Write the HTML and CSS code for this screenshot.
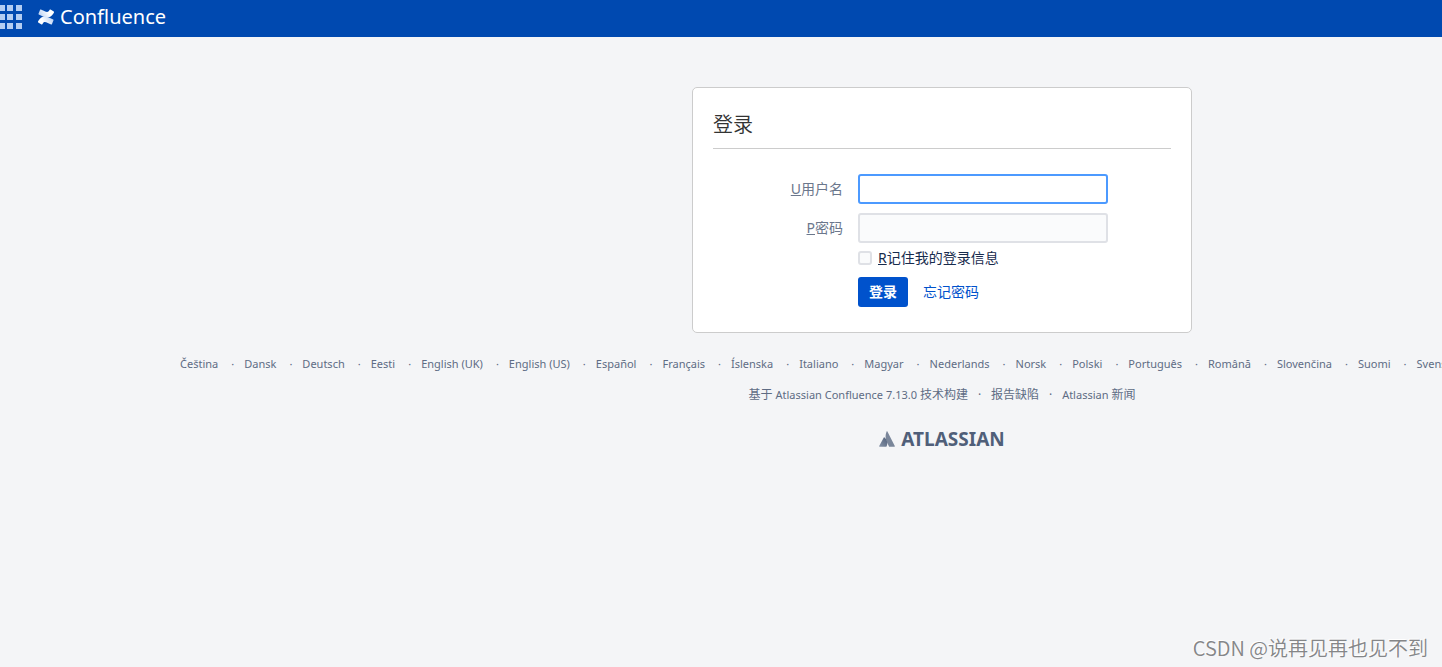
FILE: index.html
```html
<!DOCTYPE html>
<html lang="zh-CN">
<head>
<meta charset="utf-8">
<title>登录 - Confluence</title>
<link rel="stylesheet" href="styles.css">
</head>
<body>
<header class="topbar">
  <button class="switcher" type="button" aria-label="应用程序">
    <svg width="23" height="24" viewBox="0 0 23 24" fill="#b3cdf2" aria-hidden="true">
      <path d="M0 0h5v6H0zM7 0h6v6H7zM16 0h6v6h-6zM0 9h5v6H0zM7 9h6v6H7zM16 9h6v6h-6zM0 18h5v6H0zM7 18h6v6H7zM16 18h6v6h-6z"/>
    </svg>
  </button>
  <a class="brand" href="#">
    <svg width="16" height="16" viewBox="0 0 16 16" aria-hidden="true">
      <defs>
        <linearGradient id="wave-top" x1="1" y1="0" x2="0" y2="0.3"><stop offset="0.4" stop-color="#fff"/><stop offset="1" stop-color="#c4d8f5"/></linearGradient>
        <linearGradient id="wave-bottom" x1="0" y1="1" x2="1" y2="0.7"><stop offset="0.4" stop-color="#fff"/><stop offset="1" stop-color="#c4d8f5"/></linearGradient>
      </defs>
      <path fill="url(#wave-bottom)" d="M.6 11.500 0 12.600c-.1.300 0 .6.200.8l3.300 2.100c.3.200.6.100.8-.2l.5-.8c1.300-2.100 2.600-1.500 5-.4l3.300 1.400c.3.100.6 0 .8-.3l1.600-3.900c.1-.3 0-.6-.3-.7l-3.200-1.500C7 6.600 3.500 6.800.6 11.500z"/>
      <path fill="url(#wave-top)" d="M15.400 4.500 16 3.400c.1-.3 0-.6-.2-.8L12.500.5c-.3-.2-.6-.1-.8.200l-.5.8c-1.300 2.100-2.600 1.500-5 .4L2.900.5c-.3-.1-.6 0-.8.3L.5 4.700c-.1.300 0 .6.300.7L4 6.900C9 9.400 12.500 9.200 15.400 4.500z"/>
    </svg>
    <span>Confluence</span>
  </a>
</header>
<div class="viewport">
<div class="page">
  <main class="card">
    <h1 class="title">登录</h1>
    <form class="form">
      <label class="label" for="user"><u>U</u>用户名</label>
      <input class="field" id="user" type="text" autofocus>
      <label class="label" for="pass"><u>P</u>密码</label>
      <input class="field" id="pass" type="password">
      <div class="remember">
        <input class="check" id="remember" type="checkbox">
        <label for="remember"><u>R</u>记住我的登录信息</label>
      </div>
      <div class="actions">
        <button class="submit" type="button">登录</button>
        <a class="forgot" href="#">忘记密码</a>
      </div>
    </form>
  </main>
  <footer class="footer">
    <ul class="links languages">
      <li><a href="#">Čeština</a></li><li><a href="#">Dansk</a></li><li><a href="#">Deutsch</a></li><li><a href="#">Eesti</a></li><li><a href="#">English (UK)</a></li><li><a href="#">English (US)</a></li><li><a href="#">Español</a></li><li><a href="#">Français</a></li><li><a href="#">Íslenska</a></li><li><a href="#">Italiano</a></li><li><a href="#">Magyar</a></li><li><a href="#">Nederlands</a></li><li><a href="#">Norsk</a></li><li><a href="#">Polski</a></li><li><a href="#">Português</a></li><li><a href="#">Română</a></li><li><a href="#">Slovenčina</a></li><li><a href="#">Suomi</a></li><li><a href="#">Svenska</a></li>
    </ul>
    <ul class="links about">
      <li>基于 <span class="latin"><a href="#">Atlassian Confluence</a> 7.13.0</span> 技术构建</li><li><a href="#">报告缺陷</a></li><li><a href="#"><span class="latin">Atlassian</span> 新闻</a></li>
    </ul>
    <a class="atlassian" href="#">
      <svg width="16" height="16" viewBox="0 0 16 16" aria-hidden="true">
        <defs><linearGradient id="peak" x1="1" y1="0" x2="0" y2="1"><stop offset="0" stop-color="#505f79"/><stop offset="1" stop-color="#8794a8"/></linearGradient></defs>
        <path fill="#7a869a" d="M7.600.5c.2-.4.600-.4.800 0L15.800 15c.2.500 0 .8-.4.800h-4.800c-.3 0-.5-.1-.6-.4C8.500 12 4.800 7.300 7.600.5z"/>
        <path fill="url(#peak)" d="M4.800 6.400c.2-.3.500-.3.700 0 2.900 2.400 3.600 6.400 2 9-.1.300-.3.400-.6.400H.6c-.4 0-.6-.3-.4-.8z"/>
      </svg>
      <span>ATLASSIAN</span>
    </a>
  </footer>
</div>
</div>
<div class="watermark">CSDN @说再见再也见不到</div>
</body>
</html>
```
FILE: styles.css
```css
* { box-sizing: border-box; }

body {
  margin: 0;
  min-height: 100vh;
  background: #f4f5f7;
  color: #172b4d;
  font: 14px/20px "Noto Sans", "Noto Sans CJK SC", sans-serif;
}

a { color: inherit; text-decoration: none; }

.topbar {
  display: flex;
  align-items: center;
  gap: 15px;
  height: 37px;
  padding-bottom: 3px;
  background: #0049b0;
  color: #fff;
}

.switcher {
  display: flex;
  padding: 0;
  border: 0;
  background: none;
}

.brand {
  display: flex;
  align-items: center;
  gap: 6px;
  font-size: 20px;
  line-height: 28px;
}

.viewport { overflow: hidden; }

.page {
  min-width: 1884px;
  padding-top: 50px;
}

.card {
  width: 500px;
  margin: 0 auto;
  padding: 20px 20px 25px;
  border: 1px solid #ccc;
  border-radius: 5px;
  background: #fff;
}

.title {
  margin: 0 0 25px;
  padding-bottom: 6px;
  border-bottom: 1px solid #ccc;
  color: #333;
  font-size: 20px;
  font-weight: 350;
  line-height: 34px;
}

.form {
  display: grid;
  grid-template-columns: 130px 250px;
  column-gap: 15px;
  align-items: center;
}

.label {
  margin-bottom: 9px;
  color: #6b778c;
  text-align: right;
}

.field {
  width: 100%;
  height: 30px;
  margin-bottom: 9px;
  padding: 3px 4px;
  border: 2px solid #dfe1e6;
  border-radius: 3px;
  background: #fafbfc;
  font: inherit;
}

.field:focus {
  border-color: #4c9aff;
  outline: 0;
  background: #fff;
  caret-color: transparent;
}

.remember,
.actions {
  grid-column: 2;
  display: flex;
  align-items: center;
}

.remember {
  gap: 6px;
  margin: -4px 0 9px;
}

.check {
  appearance: none;
  width: 14px;
  height: 14px;
  margin: 0;
  border: 2px solid #dfe1e6;
  border-radius: 3px;
  background: #fafbfc;
}

.actions { gap: 15px; }

.submit {
  height: 30px;
  padding: 0 11px;
  border: 0;
  border-radius: 3px;
  background: #0052cc;
  color: #fff;
  font: inherit;
  font-weight: 700;
}

.forgot { color: #0052cc; }

.footer {
  padding-top: 21px;
  color: #5e6c84;
}

.links {
  display: flex;
  justify-content: center;
  margin: 0 0 11px;
  padding: 0;
  list-style: none;
  font-size: 12px;
  white-space: nowrap;
}

.languages {
  justify-content: flex-start;
  padding-left: 180px;
  font-size: 11px;
}

.latin { font-size: 11px; }

.links li + li::before {
  content: "·";
  display: inline-block;
  width: 23px;
  text-align: center;
}

.languages li + li::before { padding-left: 3px; }

.atlassian {
  display: flex;
  justify-content: center;
  align-items: center;
  gap: 6px;
  margin-top: 20px;
  color: #505f79;
  font-size: 19px;
  font-weight: 700;
  line-height: 28px;
}

.watermark {
  position: absolute;
  right: 14px;
  bottom: 4px;
  color: #858688;
  font: 350 20px/30px "Noto Sans CJK SC", sans-serif;
  text-shadow: -1px -1px 0 #fff;
}
```
